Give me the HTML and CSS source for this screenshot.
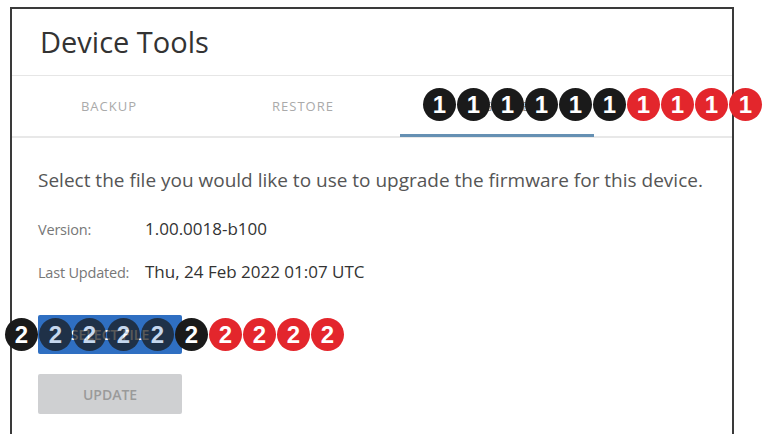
FILE: index.html
```html
<!DOCTYPE html>
<html lang="en">
<head>
  <meta charset="UTF-8">
  <meta name="viewport" content="width=device-width, initial-scale=1.0">
  <title>Device Tools</title>
  <link rel="stylesheet" href="styles.css">
</head>
<body>
  <div class="panel">
    <div class="panel-header">Device Tools</div>

    <div class="tabs">
      <div class="tab">BACKUP</div>
      <div class="tab">RESTORE</div>
      <div class="tab active">UPGRADE</div>
    </div>

    <div class="content">
      <p class="intro">Select the file you would like to use to upgrade the firmware for this device.</p>

      <div class="info-row">
        <span class="info-label">Version:</span>
        <span class="info-value">1.00.0018-b100</span>
      </div>
      <div class="info-row">
        <span class="info-label">Last Updated:</span>
        <span class="info-value">Thu, 24 Feb 2022 01:07 UTC</span>
      </div>

      <button class="btn btn-select">SELECT FILE</button>
      <button class="btn btn-update" disabled>UPDATE</button>
    </div>
  </div>

  <!-- callout markers -->
  <div class="markers markers-tabs">
    <span class="marker">1</span>
    <span class="marker">1</span>
    <span class="marker">1</span>
    <span class="marker">1</span>
    <span class="marker">1</span>
    <span class="marker">1</span>
    <span class="marker red">1</span>
    <span class="marker red">1</span>
    <span class="marker red">1</span>
    <span class="marker red">1</span>
  </div>

  <div class="markers markers-file">
    <span class="marker">2</span>
    <span class="marker faded">2</span>
    <span class="marker faded">2</span>
    <span class="marker faded">2</span>
    <span class="marker faded">2</span>
    <span class="marker">2</span>
    <span class="marker red">2</span>
    <span class="marker red">2</span>
    <span class="marker red">2</span>
    <span class="marker red">2</span>
  </div>
</body>
</html>
```

FILE: styles.css
```css
body {
  margin: 0;
  background: #fff;
  font-family: "Open Sans", "Noto Sans", sans-serif;
  position: relative;
  width: 765px;
  height: 434px;
  overflow: hidden;
}

.panel {
  margin: 7px 0 0 10px;
  width: 724px;
  height: 430px;
  border: 2px solid #3a3a3a;
  box-sizing: border-box;
  background: #fff;
}

.panel-header {
  height: 66px;
  padding-left: 28px;
  font-size: 29px;
  line-height: 66px;
  color: #333;
  border-bottom: 1px solid #e6e6e6;
}

.tabs {
  display: flex;
  height: 60px;
  border-bottom: 2px solid #e8e8e8;
}

.tab {
  width: 194px;
  text-align: center;
  line-height: 60px;
  font-size: 13px;
  letter-spacing: 1px;
  color: #aaa;
  box-sizing: border-box;
}

.tab.active {
  border-bottom: 3px solid #6590b3;
  margin-bottom: -1px;
  color: #888;
}

.content {
  padding: 29px 26px 0;
}

.intro {
  margin: 0 0 24px;
  font-size: 19px;
  color: #555;
}

.info-row {
  display: flex;
  align-items: baseline;
  height: 43px;
}

.info-label {
  width: 107px;
  font-size: 14.5px;
  color: #777;
  letter-spacing: -0.2px;
}

.info-value {
  font-size: 17px;
  color: #333;
}

.btn {
  display: block;
  width: 144px;
  height: 39px;
  border: none;
  border-radius: 2px;
  font-family: "Open Sans", sans-serif;
  font-size: 14px;
  font-weight: 600;
}

.btn-select {
  margin-top: 12px;
  background: #2f6fc2;
  color: #fff;
}

.btn-update {
  margin-top: 20px;
  height: 40px;
  background: #cfd0d2;
  color: #9a9a9a;
}

.markers {
  position: absolute;
  display: flex;
  gap: 1px;
}

.markers-tabs {
  left: 423px;
  top: 88px;
}

.markers-file {
  left: 5px;
  top: 318px;
}

.marker {
  width: 33px;
  height: 33px;
  border-radius: 50%;
  background: #1a1a1a;
  color: #fff;
  font-family: "Liberation Sans", Arial, sans-serif;
  font-weight: bold;
  font-size: 24px;
  line-height: 33px;
  text-align: center;
}

.marker.red {
  background: #e3262c;
}

.marker.faded {
  opacity: 0.72;
}
```
